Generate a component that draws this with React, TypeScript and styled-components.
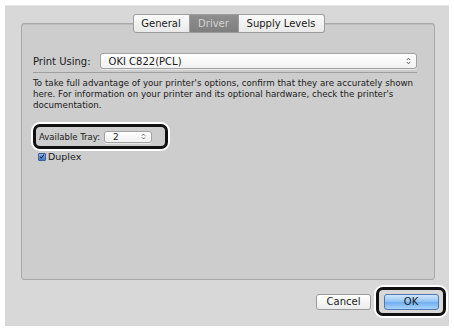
import React from "react";
import styled, { createGlobalStyle } from "styled-components";

const Global = createGlobalStyle`
  html, body {
    margin: 0;
    padding: 0;
    background: #ffffff;
  }
  body {
    font-family: "DejaVu Sans", "Liberation Sans", sans-serif;
    color: #1a1a1a;
  }
`;

const Window = styled.div`
  margin: 5px 0 0 5px;
  width: 444px;
  height: 321px;
  box-sizing: border-box;
  background: #d8d8d8;
  border-top: 1px solid #e6e6e6;
  padding: 8px 14px 0 16px;
  display: flex;
  flex-direction: column;
`;

const TabBar = styled.div`
  display: flex;
  justify-content: center;
  position: relative;
  z-index: 1;
  padding-left: 1px;
`;

const Tab = styled.div<{ $active?: boolean; $w: number }>`
  width: ${(p) => p.$w}px;
  height: 19px;
  box-sizing: border-box;
  display: flex;
  align-items: center;
  justify-content: center;
  font-size: 10px;
  border: 1px solid #9c9c9c;
  border-left-width: 0;
  color: ${(p) => (p.$active ? "#d2d2d2" : "#1a1a1a")};
  background: ${(p) =>
    p.$active
      ? "linear-gradient(#8e8e8e, #7f7f7f)"
      : "linear-gradient(#fbfbfb, #e9e9e9)"};
  &:first-child {
    border-left-width: 1px;
    border-radius: 3px 0 0 3px;
  }
  &:last-child {
    border-radius: 0 3px 3px 0;
  }
`;

const GroupBox = styled.div`
  margin-top: -10px;
  height: 257px;
  box-sizing: border-box;
  background: #cdcdcd;
  border: 1px solid #a9a9a9;
  border-radius: 3px;
  box-shadow: inset 0 1px 0 #bdbdbd;
  padding: 29px 17px 0 11px;
  display: flex;
  flex-direction: column;
`;

const PrinterRow = styled.div`
  display: flex;
  align-items: center;
  gap: 9px;
  padding-bottom: 3px;
  border-bottom: 1px solid #9e9e9e;
`;

const Label = styled.span<{ $size?: number }>`
  font-size: ${(p) => p.$size ?? 10}px;
  white-space: nowrap;
`;

const Popup = styled.div<{ $width?: number; $height: number }>`
  flex: ${(p) => (p.$width ? "none" : "1")};
  width: ${(p) => (p.$width ? `${p.$width}px` : "auto")};
  height: ${(p) => p.$height}px;
  box-sizing: border-box;
  display: flex;
  align-items: center;
  justify-content: space-between;
  padding: 0 5px 0 8px;
  background: linear-gradient(#ffffff, #f1f1f1);
  border: 1px solid #a2a2a2;
  border-radius: 3px;
  box-shadow: 0 1px 0 #e8e8e8;
`;

const PopupText = styled.span<{ $size: number }>`
  font-size: ${(p) => p.$size}px;
`;

const Description = styled.p`
  margin: 5px 0 0 0;
  font-size: 8.7px;
  line-height: 11px;
  white-space: nowrap;
`;

const Callout = styled.div`
  margin: 13px 0 0 0;
  width: 135px;
  height: 25px;
  box-sizing: border-box;
  border: 3px solid #111111;
  border-radius: 7px;
  box-shadow: 0 0 0 2px #ffffff;
  display: flex;
  align-items: center;
  gap: 4px;
  padding-left: 3px;
`;

const CheckRow = styled.label`
  margin: 2px 0 0 5px;
  display: flex;
  align-items: center;
  gap: 2px;
  font-size: 9.5px;
`;

const CheckBox = styled.span`
  width: 8px;
  height: 8px;
  box-sizing: border-box;
  border: 1px solid #3d5f98;
  border-radius: 1px;
  background: linear-gradient(#8fb6ea, #3f78c8);
  display: flex;
  align-items: center;
  justify-content: center;
`;

const Footer = styled.div`
  display: flex;
  justify-content: flex-end;
  align-items: center;
  gap: 5px;
  margin: 7px -10px 0 0;
`;

const Button = styled.button<{ $primary?: boolean }>`
  width: 55px;
  height: 16px;
  box-sizing: border-box;
  padding: 0;
  font-family: inherit;
  font-size: 10px;
  color: #1a1a1a;
  border: 1px solid ${(p) => (p.$primary ? "#4f78b0" : "#9a9a9a")};
  border-radius: 3px;
  background: ${(p) =>
    p.$primary
      ? "linear-gradient(#d2e7fb, #8fc0f3 50%, #6eaeef 51%, #a9d3fa)"
      : "linear-gradient(#ffffff, #ececec)"};
`;

const Highlight = styled.div`
  width: 70px;
  height: 29px;
  box-sizing: border-box;
  border: 3px solid #111111;
  border-radius: 7px;
  box-shadow: 0 0 0 2px #ffffff;
  display: flex;
  align-items: center;
  justify-content: center;
  margin-right: -1px;
`;

const Stepper = ({ h }: { h: number }) => (
  <svg width="5" height={h} viewBox="0 0 5 8">
    <path d="M0.8 3 L2.5 1.2 L4.2 3" fill="none" stroke="#444" strokeWidth="0.9" />
    <path d="M0.8 5 L2.5 6.8 L4.2 5" fill="none" stroke="#444" strokeWidth="0.9" />
  </svg>
);

export default function App() {
  return (
    <>
      <Global />
      <Window>
        <TabBar>
          <Tab $w={57}>General</Tab>
          <Tab $w={49} $active>
            Driver
          </Tab>
          <Tab $w={86}>Supply Levels</Tab>
        </TabBar>
        <GroupBox>
          <PrinterRow>
            <Label>Print Using:</Label>
            <Popup $height={16}>
              <PopupText $size={10}>OKI C822(PCL)</PopupText>
              <Stepper h={8} />
            </Popup>
          </PrinterRow>
          <Description>
            To take full advantage of your printer's options, confirm that they are accurately shown
            <br />
            here. For information on your printer and its optional hardware, check the printer's
            <br />
            documentation.
          </Description>
          <Callout>
            <Label $size={8.5}>Available Tray:</Label>
            <Popup $width={48} $height={12}>
              <PopupText $size={9}>2</PopupText>
              <Stepper h={7} />
            </Popup>
          </Callout>
          <CheckRow>
            <CheckBox>
              <svg width="7" height="7" viewBox="0 0 7 7">
                <path d="M1.2 3.6 L2.8 5.3 L5.9 1.2" fill="none" stroke="#10244a" strokeWidth="1.2" />
              </svg>
            </CheckBox>
            Duplex
          </CheckRow>
        </GroupBox>
        <Footer>
          <Button>Cancel</Button>
          <Highlight>
            <Button $primary>OK</Button>
          </Highlight>
        </Footer>
      </Window>
    </>
  );
}
